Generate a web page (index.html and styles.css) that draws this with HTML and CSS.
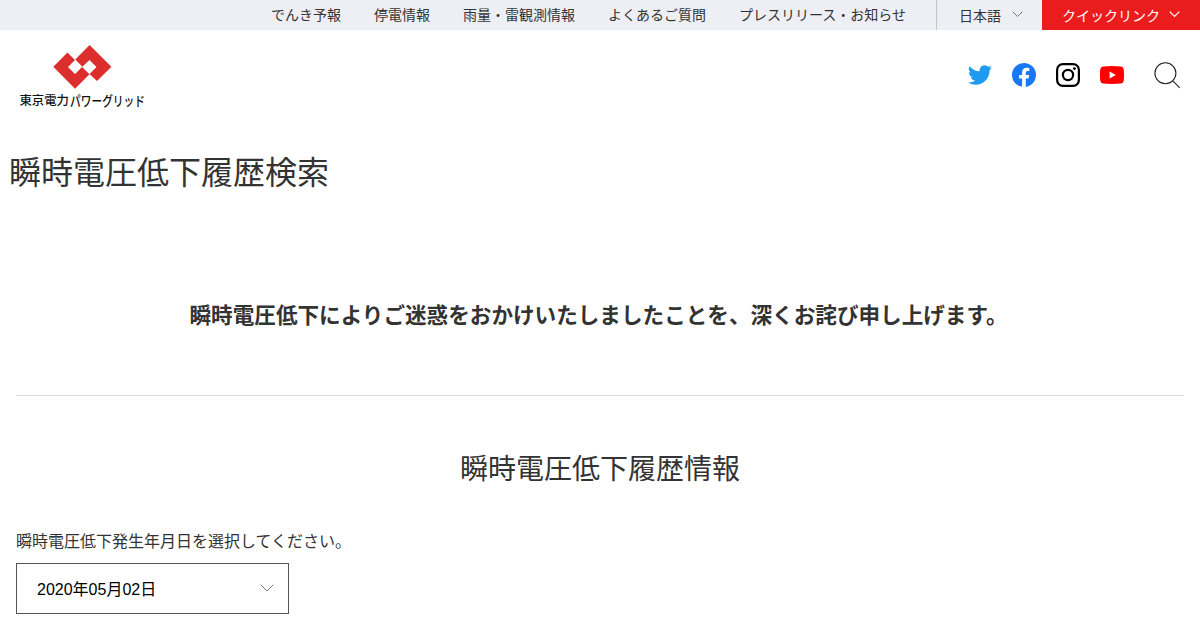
FILE: index.html
```html
<!DOCTYPE html>
<html lang="ja">
<head>
<meta charset="utf-8">
<title>瞬時電圧低下履歴検索</title>
<link rel="stylesheet" href="styles.css">
</head>
<body>
<nav class="utility">
  <a>でんき予報</a><a>停電情報</a><a>雨量・雷観測情報</a><a>よくあるご質問</a><a>プレスリリース・お知らせ</a>
  <div class="language">日本語<svg width="11" height="7" viewBox="0 0 11 7"><path d="M.7.7 5.5 5.5 10.3.7"/></svg></div>
  <div class="quick">クイックリンク<svg width="11" height="7" viewBox="0 0 11 7"><path d="M.7.7 5.5 5.5 10.3.7"/></svg></div>
</nav>
<header class="header">
  <div class="logo">
    <svg class="mark" width="60" height="46" viewBox="52 44 60 46"><path fill="#dc2f2d" d="M53.3 66.8 67.5 52.6 75 60l-7 7 7 7 7-7 7.5 7.2L75 88.8ZM89.6 45l21.8 21.8L97 81l-7.5-7.1 7-7-7-7-7.1 6.9-7.1-7.2Z"/></svg>
    <svg class="wordmark" width="132" height="24" viewBox="0 0 132 24"><text x="-.5" y="16" textLength="49.5" lengthAdjust="spacingAndGlyphs">東京電力</text><text class="kana" x="50" y="16.5" textLength="75" lengthAdjust="spacingAndGlyphs">パワーグリッド</text></svg>
  </div>
  <div class="social">
    <svg width="24" height="24" viewBox="0 0 24 24"><path fill="#1d9bf0" d="M23.95 4.57a10 10 0 0 1-2.82.77 4.96 4.96 0 0 0 2.16-2.72c-.95.55-2 .95-3.13 1.18a4.92 4.92 0 0 0-8.38 4.48A13.9 13.9 0 0 1 1.64 3.16a4.92 4.92 0 0 0 1.52 6.57 4.9 4.9 0 0 1-2.22-.61v.06a4.92 4.92 0 0 0 3.94 4.83 5 5 0 0 1-2.21.08 4.94 4.94 0 0 0 4.6 3.42A9.87 9.87 0 0 1 0 19.54a14 14 0 0 0 7.55 2.21c9.05 0 14-7.5 14-13.98l-.01-.64a9.94 9.94 0 0 0 2.41-2.56Z"/></svg>
    <svg width="24" height="24" viewBox="0 0 24 24"><circle cx="12" cy="12" r="12" fill="#1877f2"/><path fill="#fff" d="M10.1 24v-8.5H7.1V12h3V9.4c0-3 1.8-4.7 4.5-4.7 1.3 0 2.7.2 2.7.2v3h-1.5c-1.5 0-2 .9-2 1.9V12h3.4l-.6 3.5h-2.8V24Z"/></svg>
    <svg width="24" height="24" viewBox="0 0 24 24" fill="none" stroke="#000" stroke-width="2.2"><rect x="1.1" y="1.1" width="21.8" height="21.8" rx="5.8"/><circle cx="12" cy="12" r="5.1"/><circle cx="18.4" cy="5.6" r="1.45" fill="#000" stroke="none"/></svg>
    <svg width="24" height="24" viewBox="0 0 24 24"><path fill="#f00" d="M3 3.5Q12 2.7 21 3.5q2.4.3 2.7 2.7.6 5.8 0 11.6-.3 2.4-2.7 2.7-9 .8-18 0-2.4-.3-2.7-2.7-.6-5.8 0-11.6Q.6 3.8 3 3.5Z"/><path fill="#fff" d="m9.6 8.4 6.2 3.6-6.2 3.6Z"/></svg>
    <svg class="search" width="28" height="28" viewBox="0 0 28 28" fill="none" stroke="#222" stroke-width="1.1"><circle cx="12.4" cy="12.3" r="10.5"/><path d="m19.8 19.9 6.9 6.9"/></svg>
  </div>
</header>
<main>
  <h1>瞬時電圧低下履歴検索</h1>
  <div class="content">
    <p class="apology">瞬時電圧低下によりご迷惑をおかけいたしましたことを、深くお詫び申し上げます。</p>
    <h2>瞬時電圧低下履歴情報</h2>
    <p class="label">瞬時電圧低下発生年月日を選択してください。</p>
    <div class="select">2020年05月02日<svg width="14" height="8" viewBox="0 0 14 8"><path d="m.7.7 6.3 6.3L13.3.7"/></svg></div>
  </div>
</main>
</body>
</html>
```
FILE: styles.css
```css
* { box-sizing: border-box; }
body {
  margin: 0;
  height: 630px;
  overflow: hidden;
  background: #fff;
  color: #333;
  font-family: "Liberation Sans", "Noto Sans CJK JP", sans-serif;
}
h1, h2, p { margin: 0; font-weight: 400; }
svg { display: block; flex: none; }
.utility {
  display: flex;
  justify-content: flex-end;
  height: 30px;
  background: #eeeff4;
  font-size: 14px;
  line-height: 30px;
  white-space: nowrap;
}
.utility a { margin-right: 33px; }
.utility a:last-of-type { margin-right: 30px; }
.utility svg, .select svg { fill: none; stroke: #777; stroke-width: 1; }
.language {
  display: flex;
  width: 106px;
  padding: 1px 0 0 22px;
  border-left: 1px solid #c5c5c9;
}
.language svg { margin: 10px 0 0 11px; }
.quick {
  display: flex;
  width: 158px;
  padding: 1px 0 0 20px;
  background: #eb1c1e;
  color: #fff;
}
.quick svg { margin: 10px 0 0 9px; stroke: #fff; stroke-width: 1.2; }
.header {
  display: flex;
  justify-content: space-between;
  height: 90px;
  padding: 14px 19px 0 20px;
}
.mark { margin-left: 32px; }
.wordmark { margin-top: -1px; overflow: visible; }
.wordmark text {
  font-family: "Noto Sans CJK JP", sans-serif;
  font-size: 12px;
  font-weight: 500;
  fill: #111;
}
.wordmark .kana { font-size: 13.5px; }
.social {
  display: flex;
  gap: 20px;
  padding-top: 19px;
}
.search { margin: -2px 0 0 9px; }
h1 {
  padding: 29px 9px 0;
  font-size: 32px;
  line-height: 48px;
}
.content { margin: 0 16px; }
.apology {
  height: 199px;
  padding: 103px 3px 0 0;
  border-bottom: 1px solid #d9d9d9;
  font-size: 21.6px;
  font-weight: 700;
  line-height: 32px;
  text-align: center;
}
h2 {
  padding-top: 53px;
  font-size: 28px;
  line-height: 42px;
  text-align: center;
}
.label {
  padding-top: 39px;
  font-size: 16px;
  line-height: 24px;
}
.select {
  display: flex;
  align-items: center;
  justify-content: space-between;
  width: 273px;
  height: 51px;
  margin-top: 9px;
  padding: 0 14px 2px 20px;
  border: 1px solid #555;
  color: #000;
  font-size: 16px;
}
```
